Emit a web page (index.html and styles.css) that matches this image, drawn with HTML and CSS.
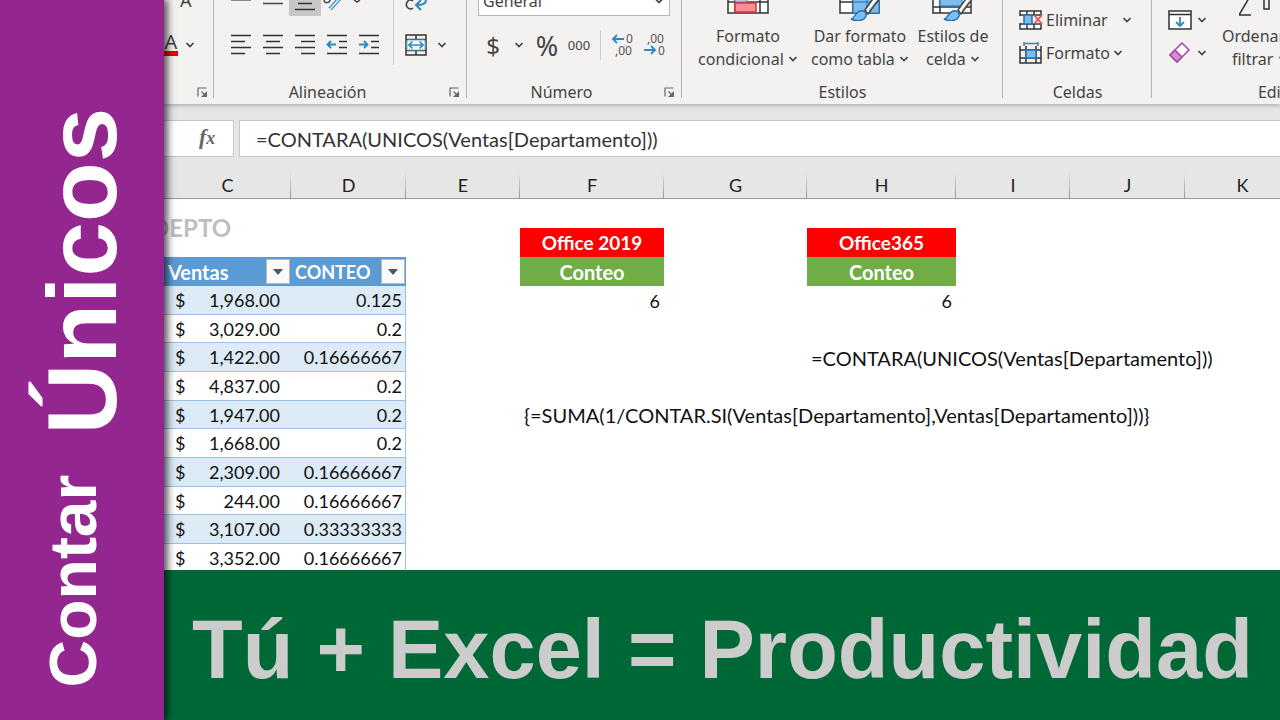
FILE: index.html
```html
<!DOCTYPE html>
<html lang="es">
<head>
<meta charset="utf-8">
<title>Contar Únicos</title>
<link rel="stylesheet" href="styles.css">
</head>
<body>
<svg class="defs" aria-hidden="true">
  <symbol id="chev" viewBox="0 0 10 8"><path d="M1.500 2l3.500 3.500L8.500 2" fill="none" stroke="#444" stroke-width="1.700"/></symbol>
  <symbol id="launch" viewBox="0 0 11 11"><path d="M1 9.500V1h8.500M4.500 4.500l4 4" fill="none" stroke="#666" stroke-width="1.200"/><path d="M10 4v6H4z" fill="#666"/></symbol>
  <symbol id="brush" viewBox="0 0 34 24"><path d="M17 10L27-4l5 2-12 16z" fill="#fff" stroke="#444" stroke-width="1.500"/><path d="M21 11L31-2" stroke="#777"/><path d="M3 19c4 0 3-6 9-8 4-1 7 2 6 5-2 5-9 6-15 3z" fill="#7dbcec" stroke="#2372b5" stroke-width="1.500"/></symbol>
</svg>
<aside class="side">
  <h1 class="side-title"><span class="word-small">Contar</span> <span class="word-big">Únicos</span></h1>
</aside>
<div class="main">
  <header class="ribbon">
    <section class="group g-font">
      <div class="tools">
        <div class="row top"><span class="grow">A</span></div>
        <div class="row mid"><button class="fontcolor" aria-label="Color de fuente">A</button><svg class="chev"><use href="#chev"/></svg></div>
      </div>
      <div class="foot"><span class="name"></span><svg class="launch"><use href="#launch"/></svg></div>
    </section>
    <section class="group g-align">
      <div class="tools split">
        <div class="stack">
          <div class="row top">
            <button aria-label="Alinear arriba"><svg width="22" height="16"><path d="M1 .5h20" stroke="#888"/></svg></button>
            <button aria-label="Alinear en medio"><svg width="22" height="16"><path d="M1 3.500h20" stroke="#444" stroke-width="1.500"/></svg></button>
            <button class="on" aria-label="Alinear abajo"><svg width="22" height="16"><path d="M4 3.500h14M1 9.500h20" stroke="#333" stroke-width="1.500"/></svg></button>
            <button class="wider" aria-label="Orientación"><svg width="42" height="16"><path d="M2 0c0 4 6 3 6 0" fill="none" stroke="#444" stroke-width="1.500"/><path d="M8 9L18-2" stroke="#2b88c4" stroke-width="4"/><path d="M8 9L18-2" stroke="#fff" stroke-width="1.500"/><path d="M32 0l3 2 3-2" fill="none" stroke="#444" stroke-width="1.500"/></svg></button>
          </div>
          <div class="row mid">
            <button aria-label="Izquierda"><svg width="22" height="22"><path d="M1 1.500h20M1 7.500h14M1 13.500h20M1 19.500h14" stroke="#333" stroke-width="1.500"/></svg></button>
            <button aria-label="Centrar"><svg width="22" height="22"><path d="M1 1.500h20M4 7.500h14M1 13.500h20M4 19.500h14" stroke="#333" stroke-width="1.500"/></svg></button>
            <button aria-label="Derecha"><svg width="22" height="22"><path d="M1 1.500h20M7 7.500h14M1 13.500h20M7 19.500h14" stroke="#333" stroke-width="1.500"/></svg></button>
            <button aria-label="Disminuir sangría"><svg width="22" height="22"><path d="M1 1.500h20M13 7.500h8M13 13.500h8M1 19.500h20" stroke="#333" stroke-width="1.500"/><path d="M10 10.500H2M5 7l-3.500 3.500L5 14" fill="none" stroke="#2b88c4" stroke-width="1.800"/></svg></button>
            <button aria-label="Aumentar sangría"><svg width="22" height="22"><path d="M1 1.500h20M13 7.500h8M13 13.500h8M1 19.500h20" stroke="#333" stroke-width="1.500"/><path d="M1 10.500h8M6 7l3.500 3.500L6 14" fill="none" stroke="#2b88c4" stroke-width="1.800"/></svg></button>
          </div>
        </div>
        <div class="stack merge">
          <div class="row top"><button aria-label="Ajustar texto"><svg width="26" height="16"><path d="M10 1a4 4.500 0 1 0 0 7" fill="none" stroke="#444" stroke-width="1.600"/><path d="M23 0c0 4-3 5-9 5M18 0l-5 5 5 5" fill="none" stroke="#2b88c4" stroke-width="2"/></svg></button></div>
          <div class="row mid"><button aria-label="Combinar y centrar"><svg width="22" height="22"><path d="M1 1h20v20H1zM1 5.500h20M1 16.500h20M11 1v4.500M11 16.500V21" fill="none" stroke="#333" stroke-width="1.500"/><path d="M2 6h18v10H2z" fill="#fff" stroke="#65b2dc"/><path d="M4 11h14M7.500 7.500L4 11l3.500 3.500M14.500 7.500L18 11l-3.500 3.500" fill="none" stroke="#2b88c4" stroke-width="1.700"/></svg></button><svg class="chev"><use href="#chev"/></svg></div>
        </div>
      </div>
      <div class="foot"><span class="name">Alineación</span><svg class="launch"><use href="#launch"/></svg></div>
    </section>
    <section class="group g-num">
      <div class="tools">
        <button class="combo" aria-label="Formato de número"><span>General</span><svg class="chev"><use href="#chev"/></svg></button>
        <div class="row nums">
          <button class="sym" aria-label="Moneda">$</button><svg class="chev"><use href="#chev"/></svg>
          <button class="sym pct" aria-label="Porcentaje">%</button>
          <button class="zeros" aria-label="Millares">000</button>
          <span class="bar"></span>
          <button class="dec" aria-label="Aumentar decimales"><svg width="24" height="24"><text x="15" y="10">0</text><text x="4" y="22">,00</text><path d="M13 6H2M6 2L2 6l4 4" fill="none" stroke="#2b88c4" stroke-width="1.800"/></svg></button>
          <button class="dec" aria-label="Disminuir decimales"><svg width="24" height="24"><text x="4" y="10">,00</text><text x="15" y="22">0</text><path d="M1 17h11M8 13l4 4-4 4" fill="none" stroke="#2b88c4" stroke-width="1.800"/></svg></button>
        </div>
      </div>
      <div class="foot"><span class="name">Número</span><svg class="launch"><use href="#launch"/></svg></div>
    </section>
    <section class="group g-styles">
      <div class="tools bigs">
        <button class="big b1"><svg width="42" height="21" viewBox="0 0 42 21"><path d="M1-4h40v17H1zM1 2h40M8-4v17M33-4v17" fill="#fff" stroke="#333" stroke-width="1.500"/><path d="M8-4h12v6H8z" fill="#b9c5ea" stroke="#6f83c9"/><path d="M8 3h21v9H8z" fill="#ff8e93" stroke="#d8343c" stroke-width="1.500"/></svg><span>Formato<br>condicional <svg class="chev"><use href="#chev"/></svg></span></button>
        <button class="big b2"><svg width="42" height="21" viewBox="0 0 42 21"><path d="M1-4h39v17H1zM1 2h39M14-4v17" fill="#fff" stroke="#333" stroke-width="1.500"/><path d="M14-4h26v17H14zM14 2h26M28-4v17" fill="#7dbcec" stroke="#2372b5"/><use href="#brush" x="9" y="0" width="34" height="24"/></svg><span>Dar formato<br>como tabla <svg class="chev"><use href="#chev"/></svg></span></button>
        <button class="big b3"><svg width="42" height="21" viewBox="0 0 42 21"><path d="M1-4h38v17H1zM1 7h38M8-4v17" fill="#fff" stroke="#333" stroke-width="1.500"/><path d="M8-4h22v10H8z" fill="#7dbcec" stroke="#2372b5"/><use href="#brush" x="9" y="0" width="34" height="24"/></svg><span>Estilos de<br>celda <svg class="chev"><use href="#chev"/></svg></span></button>
      </div>
      <div class="foot"><span class="name">Estilos</span></div>
    </section>
    <section class="group g-cells">
      <div class="tools list">
        <button class="item wide"><svg width="24" height="22"><path d="M1 2h21v18H1zM1 6h20M1 15h20M8 2v4M15 2v4M8 15v5M15 15v5" fill="#fff" stroke="#333" stroke-width="1.500"/><path d="M0 7h5v7H0zM14 7h10v7H14z" fill="#f3f2f1"/><path d="M5 6h8v9H5z" fill="#7dbcec" stroke="#2372b5" stroke-width="1.500"/><path d="M15 6l8 9M23 6l-8 9" stroke="#e8504f" stroke-width="1.800"/></svg><span>Eliminar</span><svg class="chev"><use href="#chev"/></svg></button>
        <button class="item"><svg width="24" height="22"><path d="M1 4v17h21V4M1 8h21M1 16h21M7 4v17M17 4v17" fill="none" stroke="#333" stroke-width="1.500"/><path d="M7 8h10v8H7z" fill="#7dbcec" stroke="#2372b5" stroke-width="1.500"/><path d="M5 1.500h14M5 0v4M19 0v4" stroke="#2b88c4" stroke-width="1.500"/></svg><span>Formato</span><svg class="chev"><use href="#chev"/></svg></button>
      </div>
      <div class="foot"><span class="name">Celdas</span></div>
    </section>
    <section class="group g-edit">
      <div class="tools editrow">
        <div class="list">
          <button class="item" aria-label="Rellenar"><svg width="24" height="22"><path d="M1 2h22v18H1zM1 5.500h22" fill="#fff" stroke="#333" stroke-width="1.500"/><path d="M12 8v9M8 13l4 4 4-4" fill="none" stroke="#2b88c4" stroke-width="1.800"/></svg><svg class="chev"><use href="#chev"/></svg></button>
          <button class="item" aria-label="Borrar"><svg width="24" height="22"><path d="M2 13L14 1l7 7L9 20z" fill="#fff" stroke="#a348a5" stroke-width="1.500"/><path d="M2 13l5-5 7 7-5 5z" fill="#d58ad8" stroke="#a348a5" stroke-width="1.500"/></svg><svg class="chev"><use href="#chev"/></svg></button>
        </div>
        <button class="big sort"><svg width="42" height="21" viewBox="0 0 42 21"><path d="M10-2L0 15h12M25-2V9h5V-2" fill="none" stroke="#333" stroke-width="1.500"/></svg><span>Ordenar y<br>filtrar <svg class="chev"><use href="#chev"/></svg></span></button>
      </div>
      <div class="foot"><span class="name">Edición</span></div>
    </section>
  </header>
  <div class="formula">
    <div class="fx"><i>f</i><i class="x">x</i></div>
    <input class="finput" aria-label="Barra de fórmulas" value="=CONTARA(UNICOS(Ventas[Departamento]))">
  </div>
  <div class="sheet">
    <table class="grid">
      <colgroup><col class="wc"><col class="ws"><col class="wi"><col class="wf"><col class="wg"><col class="wh"><col class="wi"><col class="ws"><col class="ws"></colgroup>
      <thead><tr><th>C</th><th>D</th><th>E</th><th>F</th><th>G</th><th>H</th><th>I</th><th>J</th><th>K</th></tr></thead>
      <tbody>
        <tr><td rowspan="2" class="depto"><span>DEPTO</span></td><td></td><td></td><td></td><td></td><td></td><td></td><td></td><td></td></tr>
        <tr><td></td><td></td><td class="red">Office 2019</td><td></td><td class="red">Office365</td><td></td><td></td><td></td></tr>
        <tr><td class="th"><div class="cell"><span class="large">Ventas</span><button class="filter" aria-label="Filtrar Ventas"></button></div></td><td class="th"><div class="cell"><span>CONTEO</span><button class="filter" aria-label="Filtrar CONTEO"></button></div></td><td></td><td class="green">Conteo</td><td></td><td class="green">Conteo</td><td></td><td></td><td></td></tr>
        <tr class="band"><td class="v"><div class="cell"><span>$</span><span>1,968.00</span></div></td><td class="n">0.125</td><td></td><td class="num">6</td><td></td><td class="num">6</td></tr>
        <tr><td class="v"><div class="cell"><span>$</span><span>3,029.00</span></div></td><td class="n">0.2</td></tr>
        <tr class="band"><td class="v"><div class="cell"><span>$</span><span>1,422.00</span></div></td><td class="n">0.16666667</td><td></td><td></td><td></td><td class="txt">=CONTARA(UNICOS(Ventas[Departamento]))</td></tr>
        <tr><td class="v"><div class="cell"><span>$</span><span>4,837.00</span></div></td><td class="n">0.2</td></tr>
        <tr class="band"><td class="v"><div class="cell"><span>$</span><span>1,947.00</span></div></td><td class="n">0.2</td><td></td><td class="txt">{=SUMA(1/CONTAR.SI(Ventas[Departamento],Ventas[Departamento]))}</td></tr>
        <tr><td class="v"><div class="cell"><span>$</span><span>1,668.00</span></div></td><td class="n">0.2</td></tr>
        <tr class="band"><td class="v"><div class="cell"><span>$</span><span>2,309.00</span></div></td><td class="n">0.16666667</td></tr>
        <tr><td class="v"><div class="cell"><span>$</span><span>244.00</span></div></td><td class="n">0.16666667</td></tr>
        <tr class="band"><td class="v"><div class="cell"><span>$</span><span>3,107.00</span></div></td><td class="n">0.33333333</td></tr>
        <tr><td class="v"><div class="cell"><span>$</span><span>3,352.00</span></div></td><td class="n">0.16666667</td></tr>
      </tbody>
    </table>
  </div>
  <footer class="banner">Tú + Excel = Productividad</footer>
</div>
</body>
</html>
```
FILE: styles.css
```css
* { box-sizing: border-box; }
body { margin: 0; height: 100vh; display: flex; overflow: hidden; background: #fff; font-family: "Noto Sans", "Open Sans", sans-serif; font-size: 16px; color: #444; }
button { font: inherit; color: inherit; background: none; border: 0; padding: 0; display: flex; align-items: center; justify-content: center; }
svg { display: block; flex: none; }
.defs { position: absolute; width: 0; height: 0; }
.chev { width: 10px; height: 8px; }

.side { flex: none; width: 164px; background: #93278f; box-shadow: 2px 0 8px 1px rgba(0,0,0,.75); z-index: 2; display: flex; align-items: flex-end; padding: 0 0 33px 26px; }
.side-title { margin: 0; writing-mode: vertical-rl; transform: rotate(180deg); font-family: "Liberation Sans", Arial, sans-serif; font-weight: bold; color: #fff; font-size: 66px; line-height: 112px; white-space: nowrap; display: flex; align-items: center; gap: 40px; }
.word-small { line-height: 80px; padding-left: 18px; }
.word-big { font-size: 98px; }

.main { flex: 1; min-width: 0; display: flex; flex-direction: column; }

.ribbon { flex: none; height: 104px; background: #f3f2f1; display: flex; overflow: hidden; z-index: 1; box-shadow: 0 1px 5px rgba(0,0,0,.3); }
.group { flex: none; display: flex; flex-direction: column; position: relative; }
.group::after { content: ""; position: absolute; right: 0; top: 0; bottom: 6px; width: 1px; background: #b5b5b5; }
.tools { height: 81px; }
.foot { display: flex; align-items: center; height: 23px; }
.name { flex: 1; text-align: center; line-height: 23px; }
.launch { width: 11px; height: 11px; margin-right: 7px; }
.row { display: flex; align-items: center; flex: none; }
.top { height: 16px; align-items: flex-start; }
.mid { height: 57px; }
.g-font { width: 50px; }
.g-font .launch { margin-right: 6px; }
.grow { padding-left: 16px; font-size: 18px; line-height: 1; margin-top: -9px; }
.fontcolor { width: 14px; height: 23px; border-bottom: 5px solid #e00; font-size: 20px; line-height: 18px; }
.g-font .mid { gap: 7px; }
.g-align { width: 253px; }
.g-align .name, .g-num .name { padding-right: 8px; }
.split { display: flex; }
.stack { display: flex; flex-direction: column; }
.g-align button { width: 32px; }
.g-align .wider { width: 44px; }
.g-align .stack:first-child { width: 180px; padding-left: 11px; border-right: 1px solid #ccc; height: 65px; }
.g-align .on { background: #c9c7c5; }
.merge { padding-left: 6px; }
.g-align .merge .mid { gap: 5px; }
.g-num { width: 215px; }
.g-num .tools { padding-left: 11px; }
.combo { width: 192px; height: 16px; background: #fff; border: 1px solid #b5b5b5; border-top: 0; justify-content: space-between; padding: 0 5px 14px 4px; line-height: 20px; }
.nums { height: 58px; }
.nums > .chev { margin-left: 6px; }
.sym { font-size: 24px; width: 30px; }
.pct { margin-left: 6px; width: 34px; font-size: 27px; }
.zeros { font-size: 13px; width: 30px; }
.bar { width: 1px; height: 30px; background: #ccc; margin: 0 6px; }
.dec { width: 32px; }
.dec text { font-size: 12px; fill: #555; }
.g-styles { width: 321px; }
.bigs { display: flex; padding-left: 12px; }
.big { flex-direction: column; justify-content: flex-start; line-height: 23px; white-space: nowrap; gap: 4px; }
.big .chev { display: inline-block; vertical-align: 2px; }
.b1 { width: 108px; }
.b2 { width: 116px; }
.b3 { width: 70px; }
.g-cells { width: 149px; }
.list { padding: 3px 0 0 16px; display: flex; flex-direction: column; align-items: flex-start; }
.item { height: 33px; gap: 3px; }
.wide .chev { margin-left: 11px; }
.g-edit { width: 266px; }
.editrow { display: flex; }
.editrow .item { gap: 5px; }
.sort { margin-left: 15px; }

.formula { flex: none; height: 67px; background: #e6e6e6; display: flex; gap: 5px; padding: 16px 0 14px; }
.fx { width: 70px; background: #fff; border: 1px solid #c6c6c6; border-left: 0; padding-left: 35px; font: bold 22px/32px "Liberation Serif", serif; color: #666; }
.fx .x { font-size: 18px; }
.finput { flex: 1; min-width: 0; border: 1px solid #c6c6c6; border-right: 0; padding: 0 16px; background: #fff; font: 20px Lato, sans-serif; color: #333; }

.sheet { flex: 1; min-height: 0; overflow: hidden; }
.grid { table-layout: fixed; width: 1136px; border-collapse: separate; border-spacing: 0; font: 18px/24px Lato, sans-serif; color: #111; }
.wc { width: 127px; }
.ws { width: 115px; }
.wi { width: 114px; }
.wf { width: 144px; }
.wg { width: 143px; }
.wh { width: 149px; }
.grid th { height: 28px; padding: 0; font-weight: normal; color: #222; background: linear-gradient(#e6e6e6, #999) right / 1px 100% no-repeat #e6e6e6; border-bottom: 1px solid #999; }
.grid td { height: 29px; padding: 0; white-space: nowrap; }
.grid tr:nth-child(3n+2) td { height: 28px; }
.grid tr:nth-child(2) td { height: 29px; }
.grid .depto { vertical-align: middle; font-size: 24px; font-weight: bold; color: #bfbfbf; }
.depto span { display: block; margin-left: -13px; }
.red, .green { text-align: center; font-weight: bold; color: #fff; }
.red { background: #f00; font-size: 19px; }
.green { background: #70ad47; font-size: 20px; }
.cell { display: flex; justify-content: space-between; align-items: center; }
.grid .th { background: #5b9bd5; color: #fff; font-weight: bold; padding: 0 1px 0 4px; }
.large { font-size: 20px; }
.filter { width: 24px; height: 25px; background: #fafafa; border: 1px solid #bbb; }
.filter::before { content: ""; border: 5px solid transparent; border-top: 6px solid #555; border-bottom: 0; }
.grid .v { padding: 0 11px; border-bottom: 1px solid #9bc2e6; }
.grid .n { padding-right: 3px; text-align: right; border-bottom: 1px solid #9bc2e6; border-right: 1px solid #9bc2e6; }
.band .v, .band .n { background: #ddebf7; }
.grid .num { text-align: right; padding-right: 4px; }
.grid .txt { padding-left: 4px; font-size: 20px; }

.banner { flex: none; height: 150px; background: #006837; color: #ccc; font: bold 83px/160px "Liberation Sans", Arial, sans-serif; padding-left: 28px; white-space: nowrap; }
```
